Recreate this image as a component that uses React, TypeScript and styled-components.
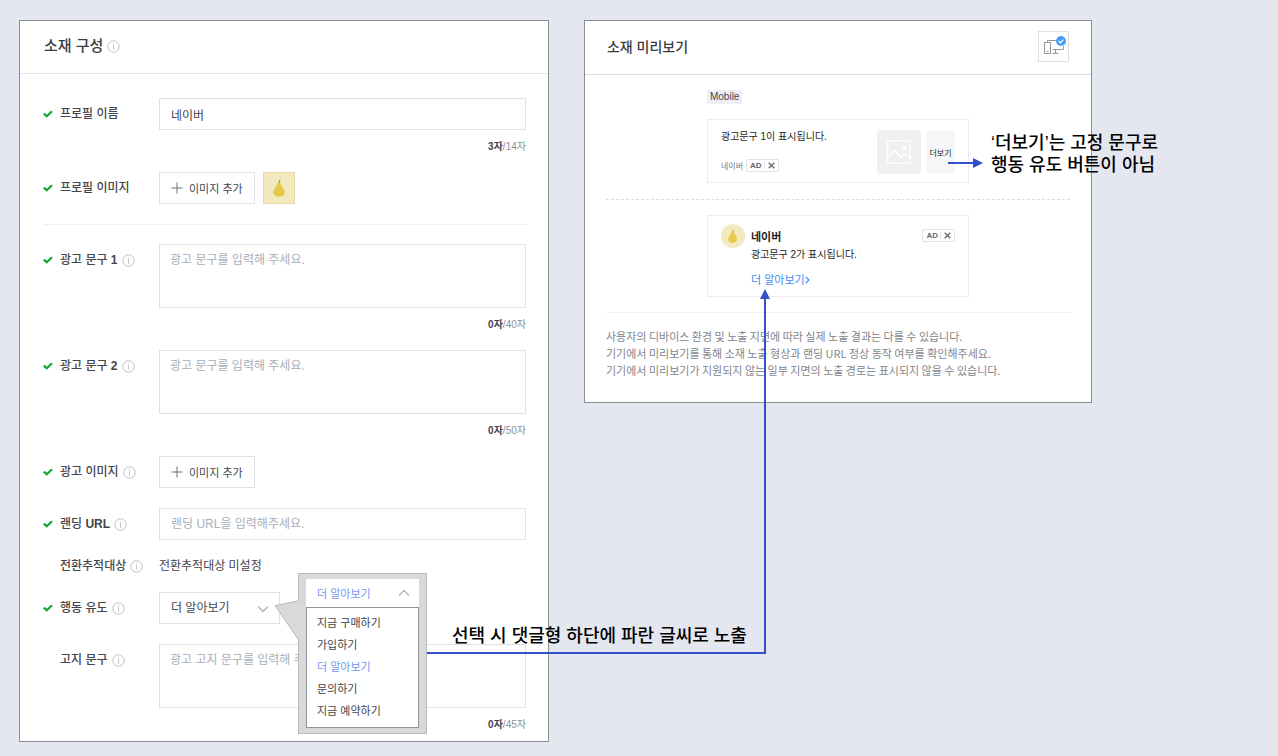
import React from "react";
import styled, { createGlobalStyle, css } from "styled-components";

const GlobalStyle = createGlobalStyle`
  *, *::before, *::after { box-sizing: border-box; }
  body {
    margin: 0;
    background: #e4e7f0;
    color: #43454d;
    font-family: "Liberation Sans", "Noto Sans CJK KR", sans-serif;
    font-size: 12px;
  }
  button, input, textarea, select { font: inherit; color: inherit; margin: 0; }
  h2, p, ul { margin: 0; padding: 0; }
`;

const Page = styled.main`
  display: flex;
  align-items: flex-start;
  gap: 35px;
  min-height: 100vh;
  padding: 20px 186px 14px 19px;
  overflow-x: hidden;
`;

const Panel = styled.section<{ $grow: number }>`
  flex: ${(p) => p.$grow} 1 0;
  min-width: 0;
  background: #fff;
  border: 1px solid #8c8d91;
`;

const PanelHeader = styled.header<{ $line: string; $height: number; $inset: number }>`
  display: flex;
  align-items: center;
  height: ${(p) => p.$height}px;
  padding: 0 22px 2px ${(p) => p.$inset}px;
  border-bottom: 1px solid ${(p) => p.$line};
`;

const PanelTitle = styled.h2<{ $size: number }>`
  font-size: ${(p) => p.$size}px;
  font-weight: 500;
  line-height: 20px;
  color: #3a3c44;
`;

/* ---------- form ---------- */

const Form = styled.form`
  padding: 24px 22px 9px 23px;
`;

const Row = styled.div<{ $gap?: number }>`
  display: grid;
  grid-template-columns: 116px minmax(0, 1fr);
  margin-top: ${(p) => p.$gap ?? 18}px;
  &:first-child { margin-top: 0; }
`;

const LabelCell = styled.div<{ $height?: number }>`
  display: flex;
  align-items: center;
  height: ${(p) => p.$height ?? 32}px;
`;

const CheckSlot = styled.span`
  display: flex;
  flex: none;
  width: 17px;
`;

const Label = styled.label`
  font-weight: 500;
  line-height: 16px;
  white-space: nowrap;
`;

const Latin = styled.span`
  font-weight: 700;
`;

const InfoButton = styled.button`
  display: flex;
  flex: none;
  margin-left: 4px;
  padding: 1px 0 0;
  border: 0;
  background: none;
`;

const field = css`
  display: block;
  width: 100%;
  border: 1px solid #dfe0e4;
  border-radius: 0;
  background: #fff;
  outline: 0;
  &::placeholder { color: #a9aeb8; opacity: 1; }
`;

const TextInput = styled.input`
  ${field}
  height: 32px;
  padding: 0 11px;
`;

const TextArea = styled.textarea`
  ${field}
  height: 64px;
  padding: 7px 10px;
  line-height: 16px;
  resize: none;
`;

const Counter = styled.p`
  margin-top: 10px;
  font-size: 10px;
  line-height: 14px;
  text-align: right;
  color: #8d9097;
  strong { color: #43454d; }
`;

const Inline = styled.div`
  display: flex;
  gap: 8px;
`;

const AddButton = styled.button`
  display: flex;
  align-items: center;
  gap: 6px;
  width: 96px;
  height: 32px;
  padding: 0 11px;
  border: 1px solid #dfe0e4;
  background: #fff;
  font-size: 11px;
  white-space: nowrap;
`;

const Thumb = styled.span`
  display: flex;
  align-items: center;
  justify-content: center;
  width: 32px;
  height: 32px;
  border: 1px solid #e2d8a8;
  background: #f3e9bf;
`;

const Rule = styled.hr`
  margin: 20px 0 19px;
  border: 0;
  border-top: 1px solid #eeeff2;
`;

const StaticValue = styled.span`
  line-height: 30px;
`;

const SelectBox = styled.div`
  position: relative;
  width: 121px;
`;

const Select = styled.select`
  ${field}
  appearance: none;
  height: 32px;
  padding: 0 11px;
`;

const SelectArrow = styled.span`
  position: absolute;
  top: 13px;
  right: 11px;
  display: flex;
  pointer-events: none;
`;

/* enlarged view of the opened drop-down */
const Popup = styled.div`
  position: absolute;
  z-index: 1;
  top: -19px;
  left: 139px;
  width: 129px;
  padding: 5px 7px;
  border: 1px solid #b9babc;
  background: #d9d9d9;
`;

const PopupTail = styled.svg`
  position: absolute;
  top: 26px;
  left: -25px;
`;

const PopupHead = styled.button`
  display: flex;
  align-items: center;
  justify-content: space-between;
  width: 100%;
  height: 28px;
  padding: 0 9px 0 11px;
  border: 0;
  background: #fff;
  color: #7395f2;
  font-size: 11px;
`;

const Options = styled.ul`
  padding: 3px 0 6px;
  border: 1px solid #8f939c;
  background: #fff;
  list-style: none;
`;

const Option = styled.button<{ $active?: boolean }>`
  display: block;
  width: 100%;
  height: 22px;
  padding: 0 10px;
  border: 0;
  background: none;
  color: ${(p) => (p.$active ? "#7395f2" : "#43454d")};
  font-size: 11px;
  text-align: left;
`;

/* ---------- preview ---------- */

const DeviceButton = styled.button`
  display: flex;
  align-items: center;
  justify-content: center;
  width: 31px;
  height: 31px;
  margin-left: auto;
  padding: 0;
  border: 1px solid #dfe0e4;
  background: #fff;
  svg { overflow: visible; }
`;

const Preview = styled.div`
  padding: 15px 21px 23px;
`;

const Stage = styled.div`
  width: 262px;
  max-width: 100%;
  margin: 0 auto;
`;

const DeviceTag = styled.span`
  display: block;
  width: fit-content;
  margin-bottom: 15px;
  padding: 0 3px;
  background: #eeeff5;
  font-size: 10px;
  line-height: 14px;
`;

const Card = styled.article<{ $padTop: number }>`
  display: flex;
  border: 1px solid #ededef;
  padding: ${(p) => p.$padTop}px 13px 8px;
`;

const CardText = styled.div`
  flex: 1;
  min-width: 0;
`;

const AdCopy = styled.p`
  font-size: 10px;
  line-height: 14px;
  color: #1e1e22;
`;

const AdvertiserLine = styled.div`
  display: flex;
  align-items: center;
  gap: 3px;
  margin-top: 15px;
  font-size: 8px;
  color: #77797f;
`;

const AdBadge = styled.span<{ $drop?: number }>`
  display: flex;
  flex: none;
  align-items: center;
  height: 13px;
  margin-top: ${(p) => p.$drop ?? 0}px;
  padding: 0 3px;
  border: 1px solid #e0e1e4;
  border-radius: 2px;
  background: #fff;
  color: #66686e;
  font-size: 8px;
  font-weight: 700;
  line-height: 11px;
`;

const CloseButton = styled.button`
  display: flex;
  margin-left: 2px;
  padding: 0 0 0 3px;
  border: 0;
  border-left: 1px solid #e0e1e4;
  background: none;
`;

const ImageSlot = styled.span`
  display: flex;
  align-items: center;
  justify-content: center;
  width: 44px;
  height: 44px;
  border-radius: 4px;
  background: #f0f0f1;
`;

const MoreSlot = styled.div`
  position: relative;
  margin-left: 5px;
`;

const MoreTile = styled.button`
  width: 29px;
  height: 44px;
  padding: 0;
  border: 0;
  border-radius: 4px;
  background: #f4f6f8;
  color: #1e1e22;
  font-size: 8px;
`;

const Avatar = styled.span`
  display: flex;
  flex: none;
  align-items: center;
  justify-content: center;
  width: 24px;
  height: 24px;
  margin-right: 6px;
  border-radius: 50%;
  background: #f3e9bf;
`;

const AdvertiserName = styled.p`
  padding: 5px 0 3px;
  font-size: 11px;
  font-weight: 700;
  line-height: 16px;
  color: #1e1e22;
`;

const LinkSlot = styled.div`
  position: relative;
  z-index: 2;
  width: fit-content;
  margin-top: 10px;
`;

const MoreLink = styled.a`
  display: flex;
  align-items: center;
  color: #3d8bf2;
  font-size: 11px;
  line-height: 16px;
  text-decoration: none;
  white-space: nowrap;
`;

const Separator = styled.hr<{ $dashed?: boolean }>`
  margin: ${(p) => (p.$dashed ? 16 : 15)}px 0 15px;
  border: 0;
  border-top: 1px ${(p) => (p.$dashed ? "dashed #dedee0" : "solid #eeeff1")};
`;

const Notice = styled.p`
  font-family: "Noto Sans CJK KR", sans-serif;
  font-size: 11px;
  line-height: 17px;
  color: #82858c;
`;

/* ---------- annotations over the panels ---------- */

const annotation = css`
  position: absolute;
  color: #000;
  font-size: 18px;
  font-weight: 500;
  line-height: 22px;
  white-space: nowrap;
  pointer-events: none;
`;

const MoreNote = styled.div`
  ${annotation}
  top: 2px;
  left: 22px;
  display: flex;
  gap: 8px;
  svg { flex: none; margin-top: 26px; }
`;

const LinkNote = styled.div`
  ${annotation}
  top: 17px;
  left: -324px;
  svg { display: block; }
`;

const LinkNoteText = styled.p`
  position: absolute;
  bottom: 7px;
  left: 25px;
`;

/* ---------- icons ---------- */

const CheckIcon = () => (
  <svg width="10" height="8" viewBox="0 0 10 8" fill="none" stroke="#16a834" strokeWidth="2.2">
    <path d="M.8 3.6 3.8 6.2 9 1.2" />
  </svg>
);

const InfoIcon = () => (
  <svg width="13" height="13" viewBox="0 0 13 13" fill="none" stroke="#bfc1c6">
    <circle cx="6.5" cy="6.5" r="5.7" />
    <path d="M6.5 5.4v4.2M6.5 3.2v1.2" />
  </svg>
);

const PlusIcon = () => (
  <svg width="12" height="12" viewBox="0 0 12 12" stroke="#6d7077">
    <path d="M6 .5v11M.5 6h11" />
  </svg>
);

const PearIcon = ({ height }: { height: number }) => (
  <svg height={height} viewBox="0 0 12 18">
    <path
      d="M6 3C7.6 3 8 5.400 9 7.400 10 9.200 11.700 10.600 11.700 13 11.700 16 9.300 17.800 6 17.800S.3 16 .3 13C.3 10.600 2 9.200 3 7.400 4 5.400 4.400 3 6 3Z"
      fill="#e8c84a"
    />
    <path d="M6 4 7 .6" stroke="#a3925a" fill="none" />
  </svg>
);

const Chevron = ({ up }: { up?: boolean }) => (
  <svg width="12" height="8" viewBox="0 0 12 8" fill="none" stroke="#b0b4bc" strokeWidth="1.3">
    <path d={up ? "M1 6.500 6 1.500l5 5" : "M1 1.500l5 5 5-5"} />
  </svg>
);

const CrossIcon = () => (
  <svg width="7" height="7" viewBox="0 0 7 7" stroke="#66686e" strokeWidth="1.3">
    <path d="M.7.7l5.600 5.600M6.300.7.7 6.300" />
  </svg>
);

const PictureIcon = () => (
  <svg width="24" height="24" viewBox="0 0 24 24" fill="none" stroke="#fff" strokeWidth="1.2">
    <rect x=".7" y=".7" width="22.600" height="22.600" />
    <path d="M1 17.500 7.500 10.500 14 17.500l4-3.500 5 4" />
    <circle cx="17.500" cy="8.500" r="1.200" fill="#fff" />
  </svg>
);

const DevicesIcon = () => (
  <svg width="23" height="19" viewBox="0 0 23 19" fill="none" stroke="#9698a0">
    <rect x="2.500" y="5.500" width="6" height="11" />
    <path d="M4.500 14.500h2M5.500 5.500v-2h9M10.500 12.500h11v-3.500M13.500 12.500v4M10.500 16.500h6" />
    <circle cx="19" cy="4" r="5" fill="#459df5" stroke="none" />
    <path d="M16.600 4 18.500 5.800 21.400 2.700" stroke="#fff" strokeWidth="1.2" />
  </svg>
);

const Info = ({ topic }: { topic: string }) => (
  <InfoButton type="button" aria-label={`${topic} 도움말`}>
    <InfoIcon />
  </InfoButton>
);

/* ---------- pieces ---------- */

type FormRowProps = {
  id?: string;
  label: string;
  latin?: string;
  checked?: boolean;
  info?: boolean;
  gap?: number;
  height?: number;
  children: React.ReactNode;
};

const FormRow = ({ id, label, latin, checked = true, info, gap, height, children }: FormRowProps) => (
  <Row $gap={gap}>
    <LabelCell $height={height}>
      <CheckSlot>{checked && <CheckIcon />}</CheckSlot>
      <Label htmlFor={id}>
        {label}
        {latin && <Latin> {latin}</Latin>}
      </Label>
      {info && <Info topic={label} />}
    </LabelCell>
    <div>{children}</div>
  </Row>
);

const Count = ({ now, max }: { now: number; max: number }) => (
  <Counter>
    <strong>{now}자</strong>/{max}자
  </Counter>
);

const AdMark = ({ drop }: { drop?: number }) => (
  <AdBadge $drop={drop}>
    AD
    <CloseButton type="button" aria-label="광고 닫기">
      <CrossIcon />
    </CloseButton>
  </AdBadge>
);

const actions = ["지금 구매하기", "가입하기", "더 알아보기", "문의하기", "지금 예약하기"];

const ActionSelect = () => (
  <SelectBox>
    <Select id="action" defaultValue="더 알아보기">
      {actions.map((a) => (
        <option key={a}>{a}</option>
      ))}
    </Select>
    <SelectArrow>
      <Chevron />
    </SelectArrow>
    <Popup>
      <PopupTail width="26" height="44" viewBox="0 0 26 44">
        <path d="M26 .5 1 5.500 26 42Z" fill="#d9d9d9" />
        <path d="M25 .7 1 5.500 25 40.500" fill="none" stroke="#b9babc" />
      </PopupTail>
      <PopupHead type="button" aria-expanded="true">
        더 알아보기
        <Chevron up />
      </PopupHead>
      <Options>
        {actions.map((a) => (
          <li key={a}>
            <Option type="button" $active={a === "더 알아보기"}>
              {a}
            </Option>
          </li>
        ))}
      </Options>
    </Popup>
  </SelectBox>
);

const CompositionPanel = () => (
  <Panel $grow={530}>
    <PanelHeader $line="#e6e7ec" $height={53} $inset={24}>
      <PanelTitle $size={15}>소재 구성</PanelTitle>
      <Info topic="소재 구성" />
    </PanelHeader>
    <Form onSubmit={(e) => e.preventDefault()}>
      <FormRow id="name" label="프로필 이름">
        <TextInput id="name" defaultValue="네이버" />
        <Count now={3} max={14} />
      </FormRow>
      <FormRow id="profile-image" label="프로필 이미지">
        <Inline>
          <AddButton id="profile-image" type="button">
            <PlusIcon />
            이미지 추가
          </AddButton>
          <Thumb>
            <PearIcon height={18} />
          </Thumb>
        </Inline>
      </FormRow>
      <Rule />
      <FormRow id="copy1" label="광고 문구" latin="1" info gap={0}>
        <TextArea id="copy1" placeholder="광고 문구를 입력해 주세요." />
        <Count now={0} max={40} />
      </FormRow>
      <FormRow id="copy2" label="광고 문구" latin="2" info>
        <TextArea id="copy2" placeholder="광고 문구를 입력해 주세요." />
        <Count now={0} max={50} />
      </FormRow>
      <FormRow id="ad-image" label="광고 이미지" info>
        <AddButton id="ad-image" type="button">
          <PlusIcon />
          이미지 추가
        </AddButton>
      </FormRow>
      <FormRow id="url" label="랜딩" latin="URL" info gap={20}>
        <TextInput id="url" placeholder="랜딩 URL을 입력해주세요." />
      </FormRow>
      <FormRow label="전환추적대상" checked={false} info gap={11} height={30}>
        <StaticValue>전환추적대상 미설정</StaticValue>
      </FormRow>
      <FormRow id="action" label="행동 유도" info gap={11}>
        <ActionSelect />
      </FormRow>
      <FormRow id="notice" label="고지 문구" checked={false} info gap={20}>
        <TextArea id="notice" placeholder="광고 고지 문구를 입력해 주세요." />
        <Count now={0} max={45} />
      </FormRow>
    </Form>
  </Panel>
);

const PreviewPanel = () => (
  <Panel $grow={508}>
    <PanelHeader $line="#d6d9e6" $height={54} $inset={22}>
      <PanelTitle $size={14}>소재 미리보기</PanelTitle>
      <DeviceButton type="button" aria-label="기기에서 미리보기">
        <DevicesIcon />
      </DeviceButton>
    </PanelHeader>
    <Preview>
      <Stage>
        <DeviceTag>Mobile</DeviceTag>
        <Card $padTop={10}>
          <CardText>
            <AdCopy>광고문구 1이 표시됩니다.</AdCopy>
            <AdvertiserLine>
              네이버
              <AdMark />
            </AdvertiserLine>
          </CardText>
          <ImageSlot>
            <PictureIcon />
          </ImageSlot>
          <MoreSlot>
            <MoreTile type="button">더보기</MoreTile>
            <MoreNote>
              <svg width="35" height="10" viewBox="0 0 35 10">
                <path d="M0 5h27" stroke="#3350cc" strokeWidth="2" />
                <path d="M25 0l10 5-10 5Z" fill="#3350cc" />
              </svg>
              <p>
                ‘더보기’는 고정 문구로
                <br />
                행동 유도 버튼이 아님
              </p>
            </MoreNote>
          </MoreSlot>
        </Card>
      </Stage>
      <Separator $dashed />
      <Stage>
        <Card $padTop={8}>
          <Avatar>
            <PearIcon height={14} />
          </Avatar>
          <CardText>
            <AdvertiserName>네이버</AdvertiserName>
            <AdCopy>광고문구 2가 표시됩니다.</AdCopy>
            <LinkSlot>
              <MoreLink href="#more">
                더 알아보기
                <svg width="5" height="8" viewBox="0 0 5 8" fill="none" stroke="#3d8bf2" strokeWidth="1.2">
                  <path d="M.8.8 4 4 .8 7.200" />
                </svg>
              </MoreLink>
              <LinkNote>
                <svg width="344" height="365" viewBox="0 0 344 365">
                  <path d="M0 364h338V8" fill="none" stroke="#3350cc" strokeWidth="2" />
                  <path d="M333 10l5-10 5 10Z" fill="#3350cc" />
                </svg>
                <LinkNoteText>선택 시 댓글형 하단에 파란 글씨로 노출</LinkNoteText>
              </LinkNote>
            </LinkSlot>
          </CardText>
          <AdMark drop={5} />
        </Card>
      </Stage>
      <Separator />
      <Notice>
        사용자의 디바이스 환경 및 노출 지면에 따라 실제 노출 결과는 다를 수 있습니다.
        <br />
        기기에서 미리보기를 통해 소재 노출 형상과 랜딩 URL 정상 동작 여부를 확인해주세요.
        <br />
        기기에서 미리보기가 지원되지 않는 일부 지면의 노출 경로는 표시되지 않을 수 있습니다.
      </Notice>
    </Preview>
  </Panel>
);

export default function App() {
  return (
    <>
      <GlobalStyle />
      <Page>
        <CompositionPanel />
        <PreviewPanel />
      </Page>
    </>
  );
}
